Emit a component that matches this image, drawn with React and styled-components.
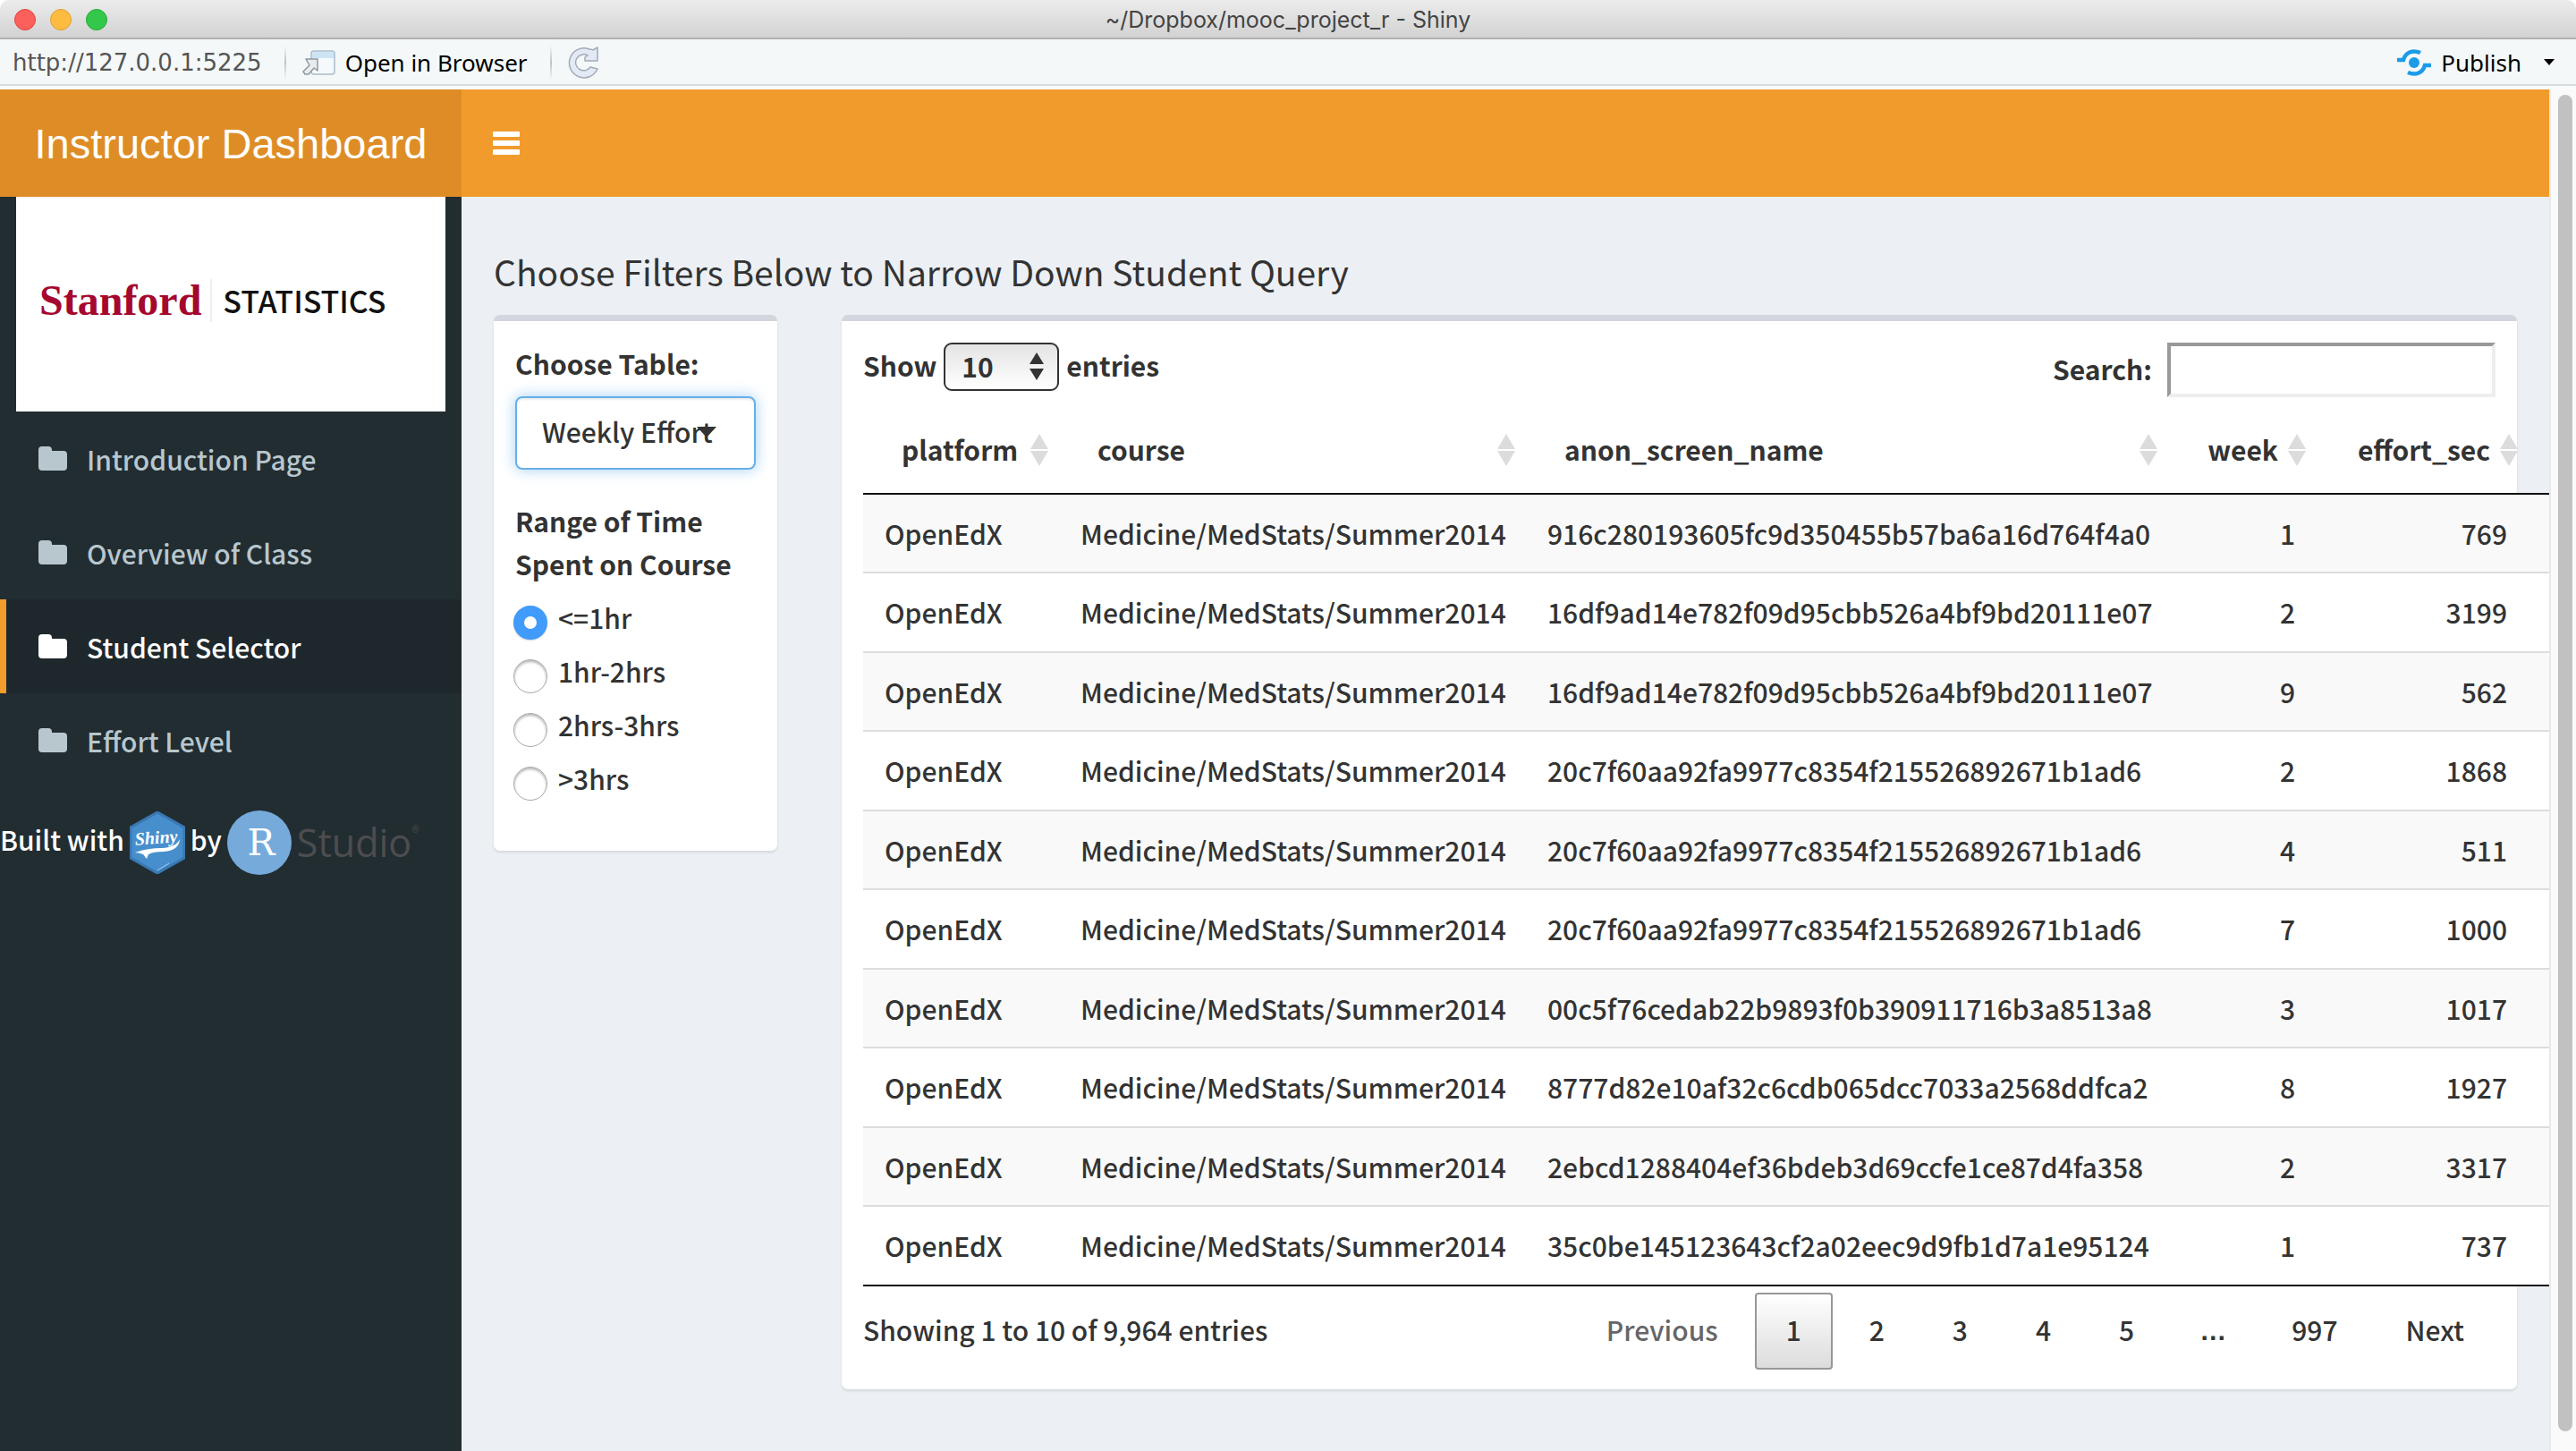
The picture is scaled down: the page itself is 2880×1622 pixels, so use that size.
import React from "react";
import styled, { createGlobalStyle, css } from "styled-components";

const sans = `"Noto Sans CJK KR", "Noto Sans", sans-serif`;

const GlobalStyle = createGlobalStyle`
  *, *::before, *::after { box-sizing: border-box; }
  body { margin: 0; background: #fff; }
  button, input, select { font: inherit; color: inherit; }
`;

const Window = styled.div`
  height: 100vh;
  display: flex;
  flex-direction: column;
  overflow: hidden;
  font-family: ${sans};
  font-size: 30px;
  font-weight: 500;
  line-height: 48px;
  color: #333;
`;

const TitleBar = styled.header`
  display: grid;
  grid-template-columns: 1fr auto 1fr;
  align-items: center;
  height: 44px;
  padding: 2px 16px 0;
  border-bottom: 2px solid #b1b1b1;
  border-radius: 10px 10px 0 0;
  background: linear-gradient(#ececec, #d2d2d2);
`;

const Lights = styled.div`
  display: flex;
  gap: 16px;
`;

const Light = styled.button`
  width: 24px;
  height: 24px;
  padding: 0;
  border: 1px solid ${(p) => p.$edge};
  border-radius: 50%;
  background: ${(p) => p.$fill};
`;

const WindowTitle = styled.h1`
  margin: 0;
  font: 400 25px/40px Inter, sans-serif;
  color: #444;
`;

const Toolbar = styled.div`
  display: flex;
  align-items: center;
  height: 56px;
  padding: 0 24px 0 14px;
  border-bottom: 4px solid #fafbfb;
  box-shadow: inset 0 -2px #d5dadc;
  background: #f4f8f9;
  font: 400 26px/40px "Noto Sans", sans-serif;
  color: #000;
`;

const Address = styled.span`
  font-family: "DejaVu Sans", sans-serif;
  color: #555;
`;

const Divider = styled.span`
  width: 2px;
  height: 38px;
  margin: 0 18px 0 25px;
  background: linear-gradient(#f4f8f9, #bfc3c4, #f4f8f9);
`;

const ToolButton = styled.button`
  display: flex;
  align-items: center;
  gap: 11px;
  padding: 0;
  border: 0;
  background: none;
`;

const Spacer = styled.span`
  flex: 1;
`;

const Viewer = styled.div`
  flex: 1;
  min-height: 0;
  display: flex;
`;

const Page = styled.div`
  flex: 1;
  min-width: 0;
  display: flex;
  flex-direction: column;
  background: #ecf0f5;
`;

const ScrollTrack = styled.div`
  width: 30px;
  padding: 6px 6px 22px 8px;
  background: #fafafa;
  border-left: 2px solid #e8e8e8;
`;

const ScrollThumb = styled.div`
  width: 16px;
  height: 100%;
  border-radius: 8px;
  background: #c1c1c1;
`;

const Navbar = styled.div`
  display: flex;
  height: 120px;
  background: #f19b2c;
  color: #fff;
`;

const Brand = styled.a`
  width: 516px;
  line-height: 122px;
  text-align: center;
  text-decoration: none;
  font-family: "Liberation Sans", Arial, sans-serif;
  font-size: 47px;
  font-weight: 400;
  color: #fff;
  background: #de8d26;
`;

const MenuToggle = styled.button`
  display: flex;
  flex-direction: column;
  justify-content: center;
  gap: 4px;
  padding: 0 35px;
  border: 0;
  background: none;
`;

const Bar = styled.span`
  width: 30px;
  height: 6px;
  border-radius: 1px;
  background: #fff;
`;

const Body = styled.div`
  flex: 1;
  min-height: 0;
  display: flex;
`;

const Sidebar = styled.aside`
  width: 516px;
  background: #222d32;
  color: #fff;
`;

const LogoCard = styled.div`
  display: flex;
  align-items: center;
  height: 240px;
  margin: 0 18px;
  padding: 0 26px 8px;
  background: #fff;
`;

const Stanford = styled.span`
  padding-right: 10px;
  border-right: 2px solid #eee;
  font: 700 48px/48px "Liberation Serif", serif;
  color: #a4082f;
`;

const Statistics = styled.span`
  padding-left: 12px;
  font-size: 34px;
  color: #111;
`;

const Nav = styled.nav`
  display: flex;
  flex-direction: column;
`;

const NavLink = styled.a`
  display: flex;
  align-items: center;
  gap: 22px;
  height: 105px;
  padding-left: 36px;
  border-left: 7px solid transparent;
  text-decoration: none;
  color: #b8c7ce;
  ${(p) =>
    p.$active &&
    css`
      color: #fff;
      background: #1e282c;
      border-left-color: #f39c2b;
    `}
`;

const Credits = styled.div`
  display: flex;
  align-items: center;
  gap: 6px;
  padding-top: 26px;
`;

const CreditText = styled.span`
  padding-bottom: 8px;
`;

const RStudioMark = styled.span`
  display: flex;
  align-items: center;
  gap: 6px;
  font: 400 43px/72px "Open Sans", sans-serif;
  color: #4d4d4f;
`;

const Registered = styled.sup`
  align-self: flex-start;
  margin-left: -6px;
  font-size: 10px;
  line-height: 42px;
`;

const Main = styled.main`
  flex: 1;
  min-width: 0;
  padding: 50px 36px;
  overflow: hidden;
`;

const Heading = styled.h2`
  margin: 0 0 16px;
  font-size: 39px;
  font-weight: 400;
  line-height: 66px;
`;

const Columns = styled.div`
  display: flex;
  align-items: flex-start;
  gap: 72px;
`;

const Box = styled.section`
  padding: 24px;
  border-top: 7px solid #d2d6de;
  border-radius: 7px;
  background: #fff;
  box-shadow: 0 2px 3px rgba(0, 0, 0, 0.1);
`;

const FilterBox = styled(Box)`
  width: 317px;
  padding-top: 23px;
  padding-bottom: 45px;
`;

const TableBox = styled(Box)`
  flex: 1;
  min-width: 0;
  padding-bottom: 22px;
`;

const FieldLabel = styled.label`
  display: block;
  margin-bottom: 13px;
  font-weight: 700;
`;

const SelectWrap = styled.div`
  position: relative;
  margin-bottom: 33px;
`;

const TableSelect = styled.select`
  appearance: none;
  width: 100%;
  height: 82px;
  padding: 0 28px 4px;
  border: 2px solid #66afe9;
  border-radius: 8px;
  background: #fff;
  box-shadow: inset 0 2px 2px rgba(0, 0, 0, 0.075), 0 0 16px rgba(102, 175, 233, 0.6);
`;

const Caret = styled.span`
  position: absolute;
  top: 34px;
  right: 44px;
  border: 11px solid transparent;
  border-top: 12px solid #333;
  border-bottom: 0;
  pointer-events: none;
`;

const RadioGroup = styled.fieldset`
  margin: 0;
  padding: 0;
  border: 0;
`;

const Legend = styled.legend`
  padding: 0;
  margin-bottom: 12px;
  font-weight: 700;
`;

const RadioRow = styled.label`
  display: flex;
  align-items: flex-start;
  gap: 12px;
  height: 60px;
  margin-left: -2px;
`;

const Radio = styled.input`
  appearance: none;
  width: 38px;
  height: 38px;
  margin: 11px 0 0;
  border: 1px solid #aaa;
  border-radius: 50%;
  background: #fff;
  box-shadow: inset 0 2px 3px rgba(0, 0, 0, 0.3);
  &:checked {
    border: 12px solid #409bfa;
    box-shadow: 0 1px 2px rgba(0, 0, 0, 0.2);
  }
`;

const TableControls = styled.div`
  display: flex;
  justify-content: space-between;
  height: 61px;
`;

const LengthLabel = styled.label`
  display: flex;
  align-items: center;
  gap: 8px;
  height: 54px;
  font-weight: 700;
`;

const ControlText = styled.span`
  padding-bottom: 4px;
`;

const LengthWrap = styled.span`
  position: relative;
  display: flex;
`;

const LengthSelect = styled.select`
  appearance: none;
  width: 129px;
  height: 54px;
  padding: 0 18px 4px;
  border: 2px solid #333;
  border-radius: 9px;
  background: linear-gradient(#e4e4e4, #fff);
`;

const Stepper = styled.svg`
  position: absolute;
  right: 17px;
  top: 11px;
  pointer-events: none;
`;

const SearchLabel = styled.label`
  display: flex;
  align-items: center;
  gap: 17px;
  font-weight: 700;
`;

const SearchInput = styled.input`
  width: 367px;
  height: 61px;
  border: 4px solid;
  border-color: #999 #eee #eee #999;
  background: #fff;
`;

const DataTable = styled.table`
  table-layout: fixed;
  width: calc(100% + 60px);
  border-spacing: 0;
  border-bottom: 2px solid #111;
`;

const Col = styled.col`
  width: ${(p) => (p.$w ? `${p.$w}px` : "auto")};
`;

const Th = styled.th`
  height: 109px;
  padding: 8px ${(p) => (p.$num ? 43 : 36)}px 0 43px;
  border-bottom: 2px solid #111;
  text-align: ${(p) => (p.$num ? "right" : "left")};
  font-weight: 700;
  position: relative;
`;

const SortIcon = styled.svg`
  position: absolute;
  right: 12px;
  top: 41px;
`;

const Tr = styled.tr`
  height: 88px;
  background: #fff;
  &:nth-child(odd) { background: #f9f9f9; }
  &:nth-child(even) { height: 89px; }
  &:first-child { height: 86px; }
  & + & > td { border-top: 2px solid #ddd; }
`;

const Td = styled.td`
  padding: 0 24px 1px;
  text-align: ${(p) => (p.$num ? "right" : "left")};
  white-space: nowrap;
`;

const TableFooter = styled.div`
  display: flex;
  justify-content: space-between;
  align-items: center;
  padding-top: 7px;
`;

const Info = styled.span`
  padding-bottom: 4px;
`;

const Pager = styled.div`
  display: flex;
  gap: 6px;
`;

const PageButton = styled.button`
  height: 86px;
  padding: 0 33px 4px;
  border: 2px solid transparent;
  border-radius: 4px;
  background: none;
  &:disabled { color: #666; }
  ${(p) =>
    p.$current &&
    css`
      border-color: #979797;
      background: linear-gradient(#fff, #dcdcdc);
    `}
`;

const Ellipsis = styled.span`
  padding: 0 32px;
  font-family: "Liberation Sans", sans-serif;
  font-weight: 700;
  line-height: 86px;
`;

const FolderIcon = () => (
  <svg width="32" height="27" viewBox="0 0 32 27" fill="currentColor">
    <path d="M4 0h7q4 0 4 4v1h13q4 0 4 4v14q0 4-4 4H4q-4 0-4-4V4q0-4 4-4z" />
  </svg>
);

const OpenIcon = () => (
  <svg width="37" height="28" viewBox="0 0 37 28">
    <rect x="10" y="1" width="26" height="26" rx="3" fill="#f6f9fb" stroke="#a9bccb" strokeWidth="1.5" />
    <path d="M11 9V4q0-2 2-2h20q2 0 2 2v5z" fill="#cde4f5" />
    <path d="M4 10h13v13l-4-3-6 7H3l-2-3 7-7z" fill="#e9ecef" stroke="#8f979e" strokeWidth="1.5" strokeLinejoin="round" />
  </svg>
);

const ReloadIcon = () => (
  <svg width="34" height="36" viewBox="0 0 34 36">
    <path d="M28 4L33 1V16H19V12L22 10A9 9 0 1 0 25 23L33 25A16.500 16.500 0 1 1 24 3Q27 3 28 4z" fill="#e3eaf6" stroke="#a3abb8" strokeWidth="1.5" strokeLinejoin="round" />
  </svg>
);

const PublishIcon = () => (
  <svg width="38" height="30" viewBox="0 0 38 30" fill="none" stroke="#1a9be8" strokeWidth="4.500">
    <circle cx="19" cy="15" r="6" fill="#1a9be8" stroke="none" />
    <path d="M0 12h7C9 4 17 0 26 4" />
    <path d="M38 18h-7C29 26 21 30 12 26" />
  </svg>
);

const ShinyLogo = () => (
  <svg width="62" height="70" viewBox="0 0 62 70">
    <path d="M31 1l30 17v34L31 69 1 52V18z" fill="#478fcc" stroke="#3a78b3" strokeWidth="3" />
    <text x="30" y="36" textAnchor="middle" fill="#fff" fontFamily="Liberation Serif" fontStyle="italic" fontWeight="700" fontSize="20" transform="rotate(-4 30 36)">Shiny</text>
    <path d="M6 46Q20 41 36 41 52 40 56 31 55 44 38 45 26 45 21 48L19 53 15 48Q10 46 6 46z" fill="#fff" />
    <path d="M31 66L44 58" stroke="#a9cdec" strokeWidth="1" />
  </svg>
);

const RLogo = () => (
  <svg width="72" height="72" viewBox="0 0 72 72">
    <circle cx="36" cy="36" r="36" fill="#75aadb" />
    <text x="38" y="50" textAnchor="middle" fill="#fff" fontFamily="DejaVu Serif" fontSize="41">R</text>
  </svg>
);

const nav = ["Introduction Page", "Overview of Class", "Student Selector", "Effort Level"];
const ranges = ["<=1hr", "1hr-2hrs", "2hrs-3hrs", ">3hrs"];
const columns = [
  { name: "platform", width: 219 },
  { name: "course", width: 522 },
  { name: "anon_screen_name", width: 718 },
  { name: "week", width: 166, num: true },
  { name: "effort_sec", width: 237, num: true },
];
const rows = [
  ["916c280193605fc9d350455b57ba6a16d764f4a0", 1, 769],
  ["16df9ad14e782f09d95cbb526a4bf9bd20111e07", 2, 3199],
  ["16df9ad14e782f09d95cbb526a4bf9bd20111e07", 9, 562],
  ["20c7f60aa92fa9977c8354f215526892671b1ad6", 2, 1868],
  ["20c7f60aa92fa9977c8354f215526892671b1ad6", 4, 511],
  ["20c7f60aa92fa9977c8354f215526892671b1ad6", 7, 1000],
  ["00c5f76cedab22b9893f0b390911716b3a8513a8", 3, 1017],
  ["8777d82e10af32c6cdb065dcc7033a2568ddfca2", 8, 1927],
  ["2ebcd1288404ef36bdeb3d69ccfe1ce87d4fa358", 2, 3317],
  ["35c0be145123643cf2a02eec9d9fb1d7a1e95124", 1, 737],
];

export default function App() {
  return (
    <Window>
      <GlobalStyle />
      <TitleBar>
        <Lights>
          <Light aria-label="Close" $fill="#fc605c" $edge="#e0443e" />
          <Light aria-label="Minimize" $fill="#fdbc40" $edge="#de9f34" />
          <Light aria-label="Zoom" $fill="#34c84a" $edge="#27aa35" />
        </Lights>
        <WindowTitle>~/Dropbox/mooc_project_r - Shiny</WindowTitle>
      </TitleBar>
      <Toolbar>
        <Address>http://127.0.0.1:5225</Address>
        <Divider />
        <ToolButton><OpenIcon />Open in Browser</ToolButton>
        <Divider />
        <ToolButton aria-label="Reload"><ReloadIcon /></ToolButton>
        <Spacer />
        <ToolButton>
          <PublishIcon />Publish
          <svg width="26" height="8" viewBox="0 0 26 8"><path d="M14 0h12l-6 7z" /></svg>
        </ToolButton>
      </Toolbar>
      <Viewer>
        <Page>
          <Navbar>
            <Brand href="#">Instructor Dashboard</Brand>
            <MenuToggle aria-label="Toggle navigation"><Bar /><Bar /><Bar /></MenuToggle>
          </Navbar>
          <Body>
            <Sidebar>
              <LogoCard>
                <Stanford>Stanford</Stanford>
                <Statistics>STATISTICS</Statistics>
              </LogoCard>
              <Nav>
                {nav.map((n) => (
                  <NavLink key={n} href="#" $active={n === "Student Selector"}>
                    <FolderIcon />{n}
                  </NavLink>
                ))}
              </Nav>
              <Credits>
                <CreditText>Built with</CreditText>
                <ShinyLogo />
                <CreditText>by</CreditText>
                <RStudioMark><RLogo />Studio<Registered>®</Registered></RStudioMark>
              </Credits>
            </Sidebar>
            <Main>
              <Heading>Choose Filters Below to Narrow Down Student Query</Heading>
              <Columns>
                <FilterBox>
                  <FieldLabel htmlFor="table">Choose Table:</FieldLabel>
                  <SelectWrap>
                    <TableSelect id="table"><option>Weekly Effort</option></TableSelect>
                    <Caret />
                  </SelectWrap>
                  <RadioGroup>
                    <Legend>Range of Time Spent on Course</Legend>
                    {ranges.map((r, i) => (
                      <RadioRow key={r}>
                        <Radio type="radio" name="range" defaultChecked={i === 0} />{r}
                      </RadioRow>
                    ))}
                  </RadioGroup>
                </FilterBox>
                <TableBox>
                  <TableControls>
                    <LengthLabel>
                      <ControlText>Show</ControlText>
                      <LengthWrap>
                        <LengthSelect><option>10</option></LengthSelect>
                        <Stepper width="16" height="31" viewBox="0 0 16 31" fill="#333">
                          <path d="M8 0l8 13H0zM8 31l8-13H0z" />
                        </Stepper>
                      </LengthWrap>
                      <ControlText>entries</ControlText>
                    </LengthLabel>
                    <SearchLabel>
                      <ControlText>Search:</ControlText>
                      <SearchInput type="search" />
                    </SearchLabel>
                  </TableControls>
                  <DataTable>
                    <colgroup>
                      {columns.map((c) => <Col key={c.name} $w={c.width} />)}
                      <Col />
                    </colgroup>
                    <thead>
                      <tr>
                        {columns.map((c) => (
                          <Th key={c.name} $num={c.num}>
                            {c.name}
                            <SortIcon width="20" height="36" viewBox="0 0 20 36" fill="#dcdcdc">
                              <path d="M10 0l10 17H0zM10 36l10-17H0z" />
                            </SortIcon>
                          </Th>
                        ))}
                        <Th as="td" />
                      </tr>
                    </thead>
                    <tbody>
                      {rows.map(([id, week, sec], i) => (
                        <Tr key={i}>
                          <Td>OpenEdX</Td>
                          <Td>Medicine/MedStats/Summer2014</Td>
                          <Td>{id}</Td>
                          <Td $num>{week}</Td>
                          <Td $num>{sec}</Td>
                          <Td />
                        </Tr>
                      ))}
                    </tbody>
                  </DataTable>
                  <TableFooter>
                    <Info>Showing 1 to 10 of 9,964 entries</Info>
                    <Pager>
                      <PageButton disabled>Previous</PageButton>
                      <PageButton $current>1</PageButton>
                      <PageButton>2</PageButton>
                      <PageButton>3</PageButton>
                      <PageButton>4</PageButton>
                      <PageButton>5</PageButton>
                      <Ellipsis>…</Ellipsis>
                      <PageButton>997</PageButton>
                      <PageButton>Next</PageButton>
                    </Pager>
                  </TableFooter>
                </TableBox>
              </Columns>
            </Main>
          </Body>
        </Page>
        <ScrollTrack><ScrollThumb /></ScrollTrack>
      </Viewer>
    </Window>
  );
}
